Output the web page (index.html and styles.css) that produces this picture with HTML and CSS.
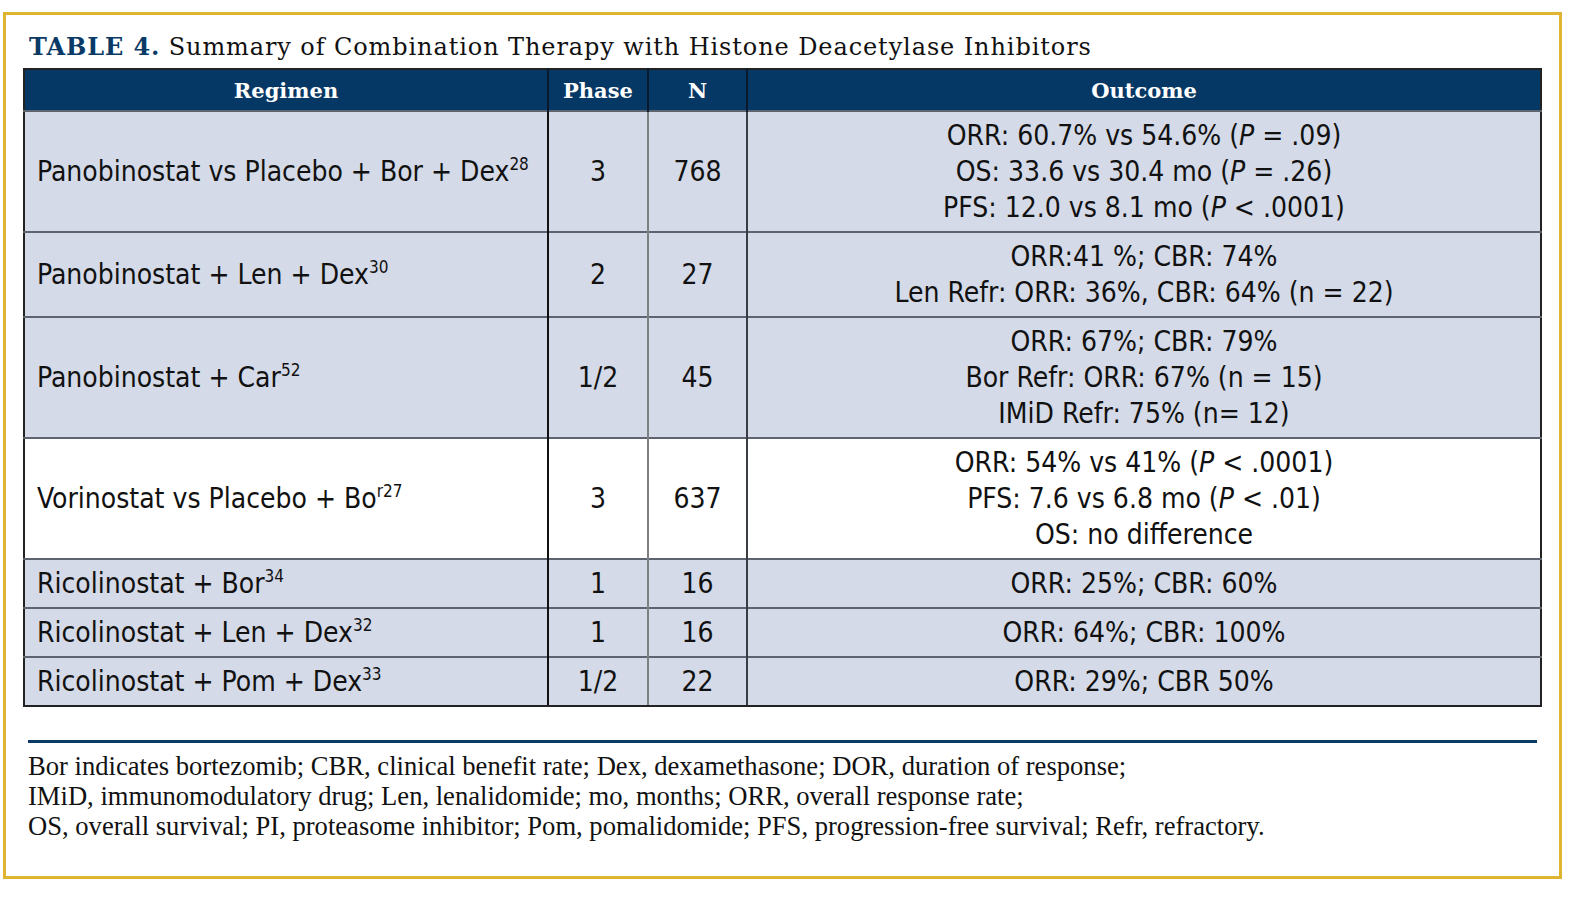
FILE: index.html
```html
<!DOCTYPE html>
<html>
<head>
<meta charset="utf-8">
<link rel="stylesheet" href="styles.css">
</head>
<body>
<div class="frame">
  <h1 class="title"><span class="label">TABLE 4.</span> Summary of Combination Therapy with Histone Deacetylase Inhibitors</h1>
  <table class="data">
    <colgroup>
      <col class="c-reg"><col class="c-phase"><col class="c-n"><col class="c-out">
    </colgroup>
    <thead>
      <tr><th class="b1">Regimen</th><th class="b2">Phase</th><th class="b3">N</th><th>Outcome</th></tr>
    </thead>
    <tbody>
      <tr class="h3">
        <td class="reg b1">Panobinostat vs Placebo + Bor + Dex<sup>28</sup></td>
        <td class="b2">3</td><td class="b3">768</td>
        <td>ORR: 60.7% vs 54.6% (<i>P</i> = .09)<br>OS: 33.6 vs 30.4 mo (<i>P</i> = .26)<br>PFS: 12.0 vs 8.1 mo (<i>P</i> &lt; .0001)</td>
      </tr>
      <tr>
        <td class="reg b1">Panobinostat + Len + Dex<sup>30</sup></td>
        <td class="b2">2</td><td class="b3">27</td>
        <td>ORR:41 %; CBR: 74%<br>Len Refr: ORR: 36%, CBR: 64% (n = 22)</td>
      </tr>
      <tr class="h3">
        <td class="reg b1">Panobinostat + Car<sup>52</sup></td>
        <td class="b2">1/2</td><td class="b3">45</td>
        <td>ORR: 67%; CBR: 79%<br>Bor Refr: ORR: 67% (n = 15)<br>IMiD Refr: 75% (n= 12)</td>
      </tr>
      <tr class="h3 white">
        <td class="reg b1">Vorinostat vs Placebo + Bo<sup>r27</sup></td>
        <td class="b2">3</td><td class="b3">637</td>
        <td>ORR: 54% vs 41% (<i>P</i> &lt; .0001)<br>PFS: 7.6 vs 6.8 mo (<i>P</i> &lt; .01)<br>OS: no difference</td>
      </tr>
      <tr>
        <td class="reg b1">Ricolinostat + Bor<sup>34</sup></td>
        <td class="b2">1</td><td class="b3">16</td>
        <td>ORR: 25%; CBR: 60%</td>
      </tr>
      <tr>
        <td class="reg b1">Ricolinostat + Len + Dex<sup>32</sup></td>
        <td class="b2">1</td><td class="b3">16</td>
        <td>ORR: 64%; CBR: 100%</td>
      </tr>
      <tr class="last">
        <td class="reg b1">Ricolinostat + Pom + Dex<sup>33</sup></td>
        <td class="b2">1/2</td><td class="b3">22</td>
        <td>ORR: 29%; CBR 50%</td>
      </tr>
    </tbody>
  </table>
  <div class="rule"></div>
  <p class="notes">Bor indicates bortezomib; CBR, clinical benefit rate; Dex, dexamethasone; DOR, duration of response;<br>IMiD, immunomodulatory drug; Len, lenalidomide; mo, months; ORR, overall response rate;<br>OS, overall survival; PI, proteasome inhibitor; Pom, pomalidomide; PFS, progression-free survival; Refr, refractory.</p>
</div>
</body>
</html>
```

FILE: styles.css
```css
html, body {
  margin: 0;
  padding: 0;
  background: #ffffff;
}
.frame {
  box-sizing: border-box;
  margin: 12px 0 0 3px;
  width: 1559px;
  height: 867px;
  border: 3px solid #dfb430;
  padding: 15px 17px 0 17px;
  display: flex;
  flex-direction: column;
}
.title {
  margin: 0 0 4px 6px;
  font-family: "DejaVu Serif", serif;
  font-weight: normal;
  font-size: 24px;
  line-height: 34px;
  letter-spacing: 0.9px;
  color: #111;
}
.title .label {
  font-weight: bold;
  color: #0b3a66;
}
.data {
  width: 1519px;
  border-collapse: collapse;
  border: 2px solid #222;
  font-family: "Liberation Sans Narrow", "DejaVu Sans Condensed", Roboto, sans-serif;
  font-size: 28px;
  color: #111;
}
.c-reg { width: 524px; }
.c-phase { width: 100px; }
.c-n { width: 99px; }
.data th {
  background: #063866;
  color: #fff;
  font-family: "DejaVu Serif", serif;
  font-weight: bold;
  font-size: 21px;
  height: 40px;
  padding: 0;
  text-align: center;
}
.data td {
  background: #d4dae7;
  text-align: center;
  padding: 5.5px 4px;
  line-height: 36px;
  border-top: 2px solid #5d6470;
}
.data tr.white td { background: #ffffff; }
.data td.reg {
  text-align: left;
  padding-left: 12px;
}
.b1 { border-right: 2px solid #111; }
.b2 { border-right: 2px solid #7d7f85; }
.b3 { border-right: 2px solid #3a3d44; }
.data th.b1, .data th.b2, .data th.b3 { border-right: 2px solid #0a1a2c; }
.data tr.last td { border-bottom: 2px solid #222; }
sup {
  font-size: 17px;
  line-height: 0;
  vertical-align: 11px;
}
.rule {
  margin: 33px 5px 0 5px;
  height: 3px;
  background: #0b3a66;
}
.notes {
  margin: 8px 0 0 5px;
  font-family: "Liberation Serif", serif;
  font-size: 26.6px;
  line-height: 30px;
  color: #111;
}
```
